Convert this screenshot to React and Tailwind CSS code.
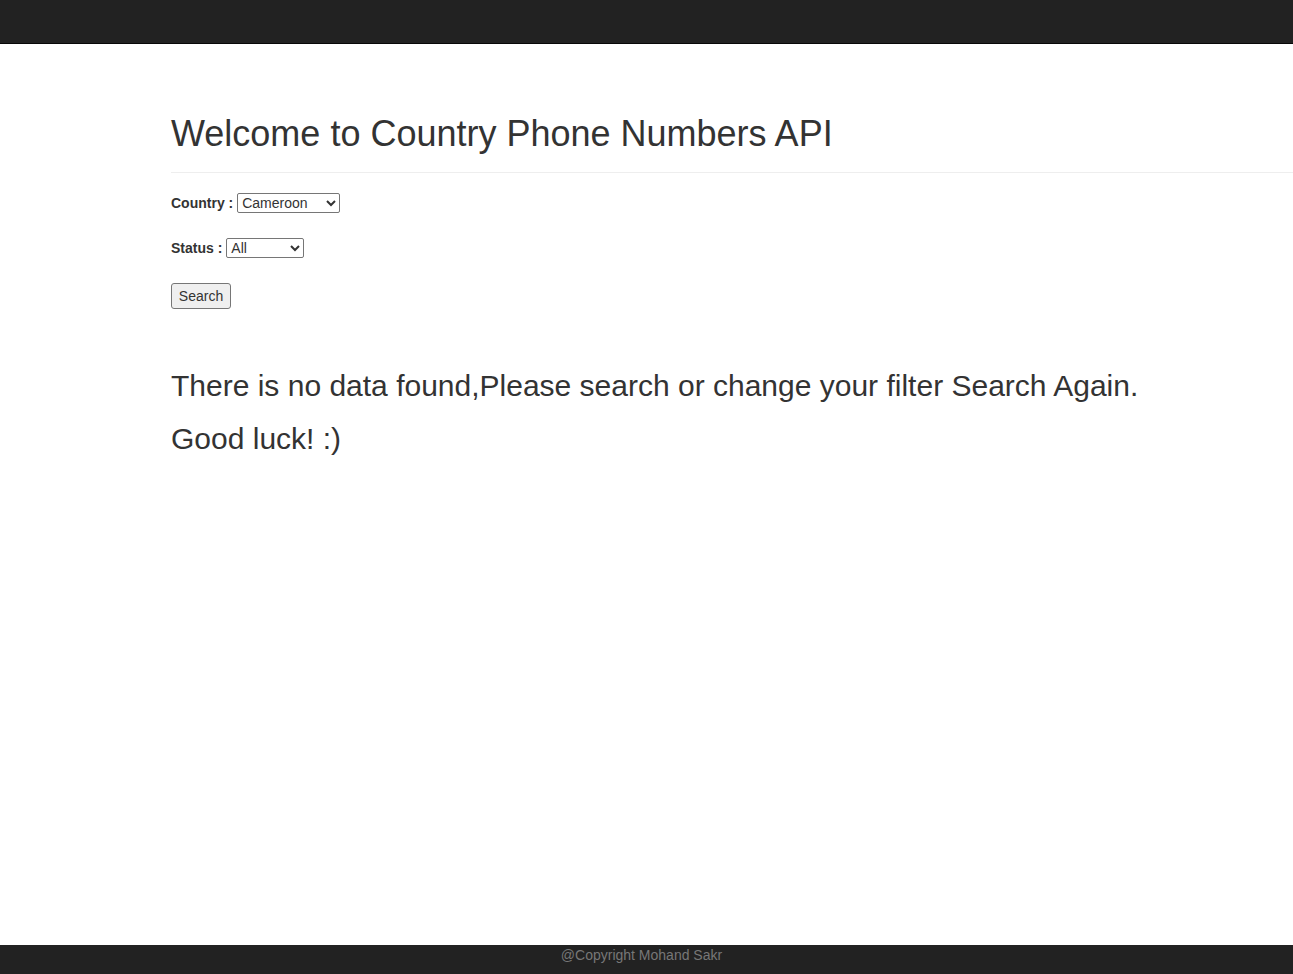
export default function App() {
  return (
    <div
      className="min-h-screen flex flex-col bg-white text-[#333]"
      style={{ fontFamily: '"Liberation Sans", Arial, sans-serif' }}
    >
      {/* Navbar */}
      <div className="h-[44px] bg-[#222] border-b border-[#080808] shrink-0" />

      {/* Content */}
      <div className="flex-1 pl-[171px]">
        <div className="mt-[70px] pb-[8px] border-b border-[#eee]">
          <h1 className="text-[36px] leading-[1.1] mb-[10px]">Welcome to Country Phone Numbers API</h1>
        </div>

        <div className="mt-[20px] flex items-center gap-[4px] h-[20px] text-[14px]">
          <label className="font-bold pt-[2px]">Country :</label>
          <select
            defaultValue="Cameroon"
            className="w-[103px] h-[20px] text-[14px] leading-none border border-[#767676] rounded-[2px] bg-white text-[#333] pl-0"
            style={{ appearance: 'auto' }}
          >
            <option>Cameroon</option>
            <option>Ethiopia</option>
            <option>Morocco</option>
            <option>Mozambique</option>
            <option>Uganda</option>
          </select>
        </div>

        <div className="mt-[25px] flex items-center gap-[4px] h-[20px] text-[14px]">
          <label className="font-bold pt-[2px]">Status :</label>
          <select
            defaultValue="All"
            className="w-[78px] h-[20px] text-[14px] leading-none border border-[#767676] rounded-[2px] bg-white text-[#333] pl-0"
            style={{ appearance: 'auto' }}
          >
            <option>All</option>
            <option>Valid</option>
            <option>Invalid</option>
          </select>
        </div>

        <div className="mt-[25px]">
          <button className="w-[60px] h-[26px] pt-[1px] text-[14px] bg-[#efefef] border border-[#767676] rounded-[3px] text-[#333]">
            Search
          </button>
        </div>

        <h2 className="mt-[60px] text-[30px] leading-[33px]">
          There is no data found,Please search or change your filter Search Again.
        </h2>
        <h2 className="mt-[20px] text-[30px] leading-[33px]">Good luck! :)</h2>
      </div>

      {/* Footer */}
      <div className="h-[29px] bg-[#222] shrink-0 pr-[10px] text-center text-[14px] leading-[20px] text-[#777]">
        @Copyright Mohand Sakr
      </div>
    </div>
  );
}
